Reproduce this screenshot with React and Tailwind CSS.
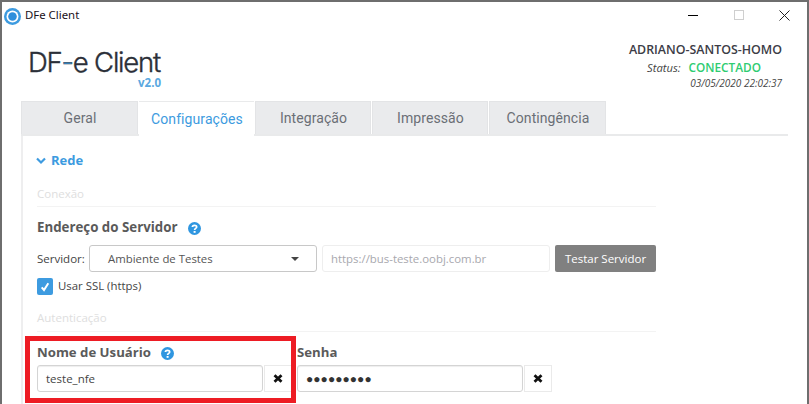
import React from "react";

const open = "font-['Open_Sans','Liberation_Sans',sans-serif]";

function Help() {
  return (
    <svg width="13" height="13" viewBox="0 0 13 13" className="block">
      <circle cx="6.5" cy="6.5" r="6.5" fill="#2f96e0" />
      <path d="M4.4 5.1 C4.4 2.7 8.7 2.7 8.7 5 C8.7 6.5 6.6 6.3 6.6 8" fill="none" stroke="#fff" strokeWidth="1.7" />
      <rect x="5.6" y="9" width="2" height="1.8" fill="#fff" />
    </svg>
  );
}

function Times() {
  return (
    <svg width="10" height="9" viewBox="0 0 10 9">
      <path d="M1.5 1.2 L8.5 7.8 M8.5 1.2 L1.5 7.8" stroke="#111" strokeWidth="2.8" />
    </svg>
  );
}

function Section({ children, className }) {
  return (
    <div className={`text-[11.5px] leading-[16px] text-[#dedede] border-b border-[#f3f3f3] ${className}`}>
      {children}
    </div>
  );
}

function Clearable({ children, width }) {
  return (
    <div className="flex h-[27px]" style={{ width }}>
      <div className="flex-1 border border-[#d4d4d4] rounded-[3px] flex items-center pl-[8px] text-[11.5px] text-[#444] shadow-[inset_0_1px_1px_rgba(0,0,0,0.07)]">
        {children}
      </div>
      <div className="w-[28px] ml-px border border-[#eaeaea] flex items-center justify-center shrink-0">
        <Times />
      </div>
    </div>
  );
}

const tabs = [
  ["Geral", "w-[117px]"],
  ["Configurações", "w-[115px]"],
  ["Integração", "w-[116px]"],
  ["Impressão", "w-[116px]"],
  ["Contingência", "w-[117px]"],
];

export default function App() {
  return (
    <div className={`w-[809px] h-[404px] overflow-hidden bg-white relative border-t-2 border-x-2 border-t-[#6e6e6e] border-x-[#6e6e6e] ${open}`}>
      {/* title bar */}
      <div className="h-[26px] flex items-center pl-[2px] pr-[17px]">
        <svg width="17" height="17" viewBox="0 0 17 17" className="mt-[2px]">
          <circle cx="8.5" cy="8.5" r="8.5" fill="#3d9be0" />
          <circle cx="8.5" cy="8.5" r="6" fill="#fff" />
          <circle cx="8.5" cy="8.5" r="4.3" fill="#2f8fdc" />
        </svg>
        <span className="ml-[4px] text-[11.4px] text-[#1a1020] font-['Noto_Sans',sans-serif] leading-none">DFe Client</span>
        <div className="ml-auto flex items-center">
          <div className="w-[10px] h-px bg-black" />
          <div className="ml-[36px] w-[10px] h-[10px] border border-[#cfcfcf]" />
          <svg width="11" height="11" viewBox="0 0 11 11" className="ml-[35px]">
            <path d="M0.5 0.5 L10.5 10.5 M10.5 0.5 L0.5 10.5" stroke="#222" strokeWidth="1" />
          </svg>
        </div>
      </div>

      {/* header */}
      <div className="h-[73px] flex justify-between pl-[26px] pr-[25px]">
        <div className="w-[133px] pt-[21px] flex flex-col">
          <div className="font-['Inter',sans-serif] text-[27.5px] leading-[27px] text-[#2b2f38] tracking-[-1.2px] font-light whitespace-nowrap [-webkit-text-stroke:0.4px_#2b2f38]">
            DF<span className="text-[#3d9be0]">-</span>e Client
          </div>
          <div className="self-end mt-[2px] text-[11.5px] leading-[10px] font-bold text-[#5aa8e0]">v2.0</div>
        </div>
        <div className="flex flex-col items-end pt-[15px]">
          <div className="text-[12.4px] leading-[14px] font-semibold text-[#3c3c46]">ADRIANO-SANTOS-HOMO</div>
          <div className="flex items-center text-[11.2px] leading-[17px] mt-[2px] mr-[21px]">
            <span className="italic text-[#444]">Status:</span>
            <span className="ml-[8px] font-semibold text-[#2ecc71] text-[11.8px]">CONECTADO</span>
          </div>
          <div className="italic text-[10px] leading-[14px] text-[#444]">03/05/2020 22:02:37</div>
        </div>
      </div>

      {/* tabs */}
      <div className="mx-[19px] flex gap-px border-b-2 border-[#e9eaeb] h-[35px] font-['Roboto',sans-serif] text-[14px] tracking-[0.08px]">
        {tabs.map(([t, w], i) => (
          <div
            key={t}
            className={`${w} h-[33px] flex items-center justify-center ${
              i === 1
                ? "bg-white text-[#3d9be0] border-t border-[#e9eaeb] h-[35px]"
                : "bg-[#eaebed] text-[#6b6f76] border border-b-0 border-[#e3e4e6]"
            }`}
          >
            <span className="ml-px">{t}</span>
          </div>
        ))}
      </div>

      {/* panel */}
      <div className="ml-[19px] border-l-2 border-[#eeeeef] pl-[14px] pr-[151px] pt-[16px] h-[270px]">
        <div className="flex items-center h-[18px] -ml-px text-[#3d9be0] font-bold text-[13px]">
          <svg width="10" height="8" viewBox="0 0 10 8" className="mr-[5px]">
            <path d="M1 1.5 L5 5.5 L9 1.5" fill="none" stroke="#3d9be0" strokeWidth="2.2" />
          </svg>
          Rede
        </div>
        <Section className="mt-[16px] h-[21px]">Conexão</Section>
        <div className="flex items-center mt-[12px] h-[18px] text-[13.3px] font-bold text-[#5a5a5a]">
          Endereço do Servidor
          <span className="ml-[10px]"><Help /></span>
        </div>
        <div className="flex items-center mt-[8px] h-[27px]">
          <span className="w-[52px] text-[#444] text-[11.5px]">Servidor:</span>
          <div className="w-[228px] h-[27px] border border-[#c8c8c8] rounded-[3px] flex items-center pl-[18px] pr-[17px] justify-between text-[#555] text-[11.4px]">
            Ambiente de Testes
            <span className="w-0 h-0 border-x-[4px] border-x-transparent border-t-[4px] border-t-[#444]" />
          </div>
          <div className="ml-[5px] w-[228px] h-[27px] border border-[#eeeeee] rounded-[3px] flex items-center pl-[8px] text-[#a8a8ae] text-[11.4px]">
            https://bus-teste.oobj.com.br
          </div>
          <div className="ml-[5px] w-[101px] h-[27px] rounded-[2px] bg-[#808080] text-white flex items-center justify-center text-[11.5px]">
            Testar Servidor
          </div>
        </div>
        <div className="flex items-center mt-[6px] h-[17px]">
          <div className="w-[16px] h-[17px] rounded-[2px] bg-[#3d9be0] flex items-center justify-center">
            <svg width="10" height="10" viewBox="0 0 10 10">
              <path d="M1.7 5.3 L4 8 L8.3 1.3" fill="none" stroke="#fff" strokeWidth="2" />
            </svg>
          </div>
          <span className="ml-[5px] text-[11.4px] text-[#444] -mt-[1px]">Usar SSL (https)</span>
        </div>
        <Section className="mt-[15px] h-[22px]">Autenticação</Section>
        <div className="flex mt-[12px]">
          <div className="w-[260px]">
            <div className="flex items-center h-[18px] text-[13.2px] font-bold text-[#5a5a5a]">
              Nome de Usuário
              <span className="ml-[10px]"><Help /></span>
            </div>
            <div className="mt-[3px]">
              <Clearable width="255px">teste_nfe</Clearable>
            </div>
          </div>
          <div className="w-[260px]">
            <div className="flex items-center h-[18px] text-[13.2px] font-bold text-[#5a5a5a]">Senha</div>
            <div className="mt-[3px]">
              <Clearable width="255px">
                <span className="tracking-[0.05px] text-[#333] text-[12px] font-['Liberation_Sans',sans-serif]">●●●●●●●●●</span>
              </Clearable>
            </div>
          </div>
        </div>
      </div>

      {/* red annotation */}
      <div className="absolute left-[23px] top-[334px] w-[271px] h-[67px] border-[5px] border-[#ed1c24] pointer-events-none" />
    </div>
  );
}
